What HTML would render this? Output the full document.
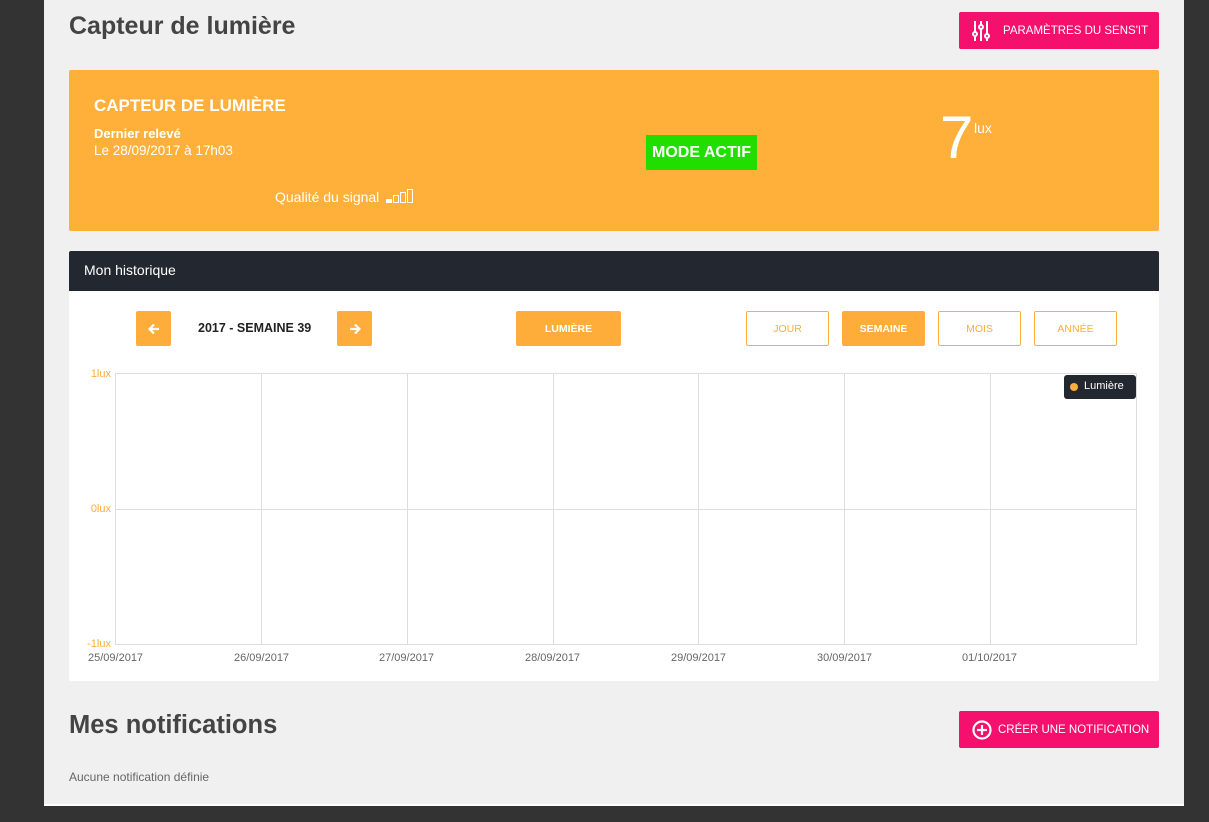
<!DOCTYPE html><html><head><meta charset="utf-8"><style>
*{box-sizing:border-box;margin:0;padding:0}
body{width:1209px;height:822px;background:#333;font-family:"Liberation Sans",sans-serif;position:relative;overflow:hidden}
.panel{position:absolute;left:44px;top:0;width:1140px;height:806px;background:#f0f0f0;border-bottom:2px solid #fff}
.a{position:absolute}
.btn{position:absolute;background:#f5106d;color:#fff;font-size:11.5px;border-radius:2px;display:flex;align-items:center;white-space:nowrap}
.ob{position:absolute;background:#ffad3a;color:#fff;font-size:10.5px;font-weight:bold;display:flex;align-items:center;justify-content:center;border-radius:2px}
.wb{position:absolute;border:1px solid #ffad3a;color:#ffad3a;font-size:10.5px;background:#fff;display:flex;align-items:center;justify-content:center;border-radius:2px}
.gv{position:absolute;top:373px;width:1px;height:271px;background:#ddd}
.gh{position:absolute;left:115px;width:1022px;height:1px;background:#ddd}
.yl{position:absolute;color:#ffad3a;font-size:11px;right:1098px}
.xl{position:absolute;top:652px;font-size:11px;color:#666}
</style></head><body>
<div class="panel"></div>
<div class="a" style="left:69px;top:12px;font-size:25px;font-weight:bold;color:#444">Capteur de lumière</div>
<div class="btn" style="left:959px;top:12px;width:200px;height:37px"><svg style="margin-left:13px" width="18" height="20" viewBox="0 0 18 20" stroke="#fff" stroke-width="2" fill="none"><line x1="3" y1="0" x2="3" y2="20"/><line x1="9" y1="0" x2="9" y2="20"/><line x1="15" y1="0" x2="15" y2="20"/><circle cx="3" cy="13" r="2" fill="#f5106d"/><circle cx="9" cy="6" r="2" fill="#f5106d"/><circle cx="15" cy="15" r="2" fill="#f5106d"/></svg><span style="margin-left:13px">PARAMÈTRES DU SENS'IT</span></div>
<div class="a" style="left:69px;top:70px;width:1090px;height:161px;background:#ffb03b;border-radius:2px"></div>
<div class="a" style="left:94px;top:96px;color:#fff;font-size:17px;font-weight:bold">CAPTEUR DE LUMIÈRE</div>
<div class="a" style="left:94px;top:126px;color:#fff;font-size:13px;font-weight:bold">Dernier relevé</div>
<div class="a" style="left:94px;top:143px;color:#fff;font-size:13.5px">Le 28/09/2017 à 17h03</div>
<div class="a" style="left:275px;top:189px;color:#fff;font-size:14px">Qualité du signal <span style="display:inline-block;width:34px;height:14px;position:relative;vertical-align:-1px"><i style="position:absolute;left:3px;bottom:0;width:6px;height:4px;background:#fff"></i><i style="position:absolute;left:10px;bottom:0;width:6px;height:8px;border:1px solid #fff"></i><i style="position:absolute;left:17px;bottom:0;width:6px;height:11px;border:1px solid #fff"></i><i style="position:absolute;left:24px;bottom:0;width:6px;height:14px;border:1px solid #fff"></i></span></div>
<div class="a" style="left:646px;top:135px;width:111px;height:35px;background:#22dd00;color:#fff;font-weight:bold;font-size:16px;display:flex;align-items:center;justify-content:center">MODE ACTIF</div>
<div class="a" style="left:940px;top:102px;color:#fff;font-size:60px;line-height:72px">7</div>
<div class="a" style="left:974px;top:120px;color:#fff;font-size:14px">lux</div>
<div class="a" style="left:69px;top:251px;width:1090px;height:430px;background:#fff;border-radius:2px"></div>
<div class="a" style="left:69px;top:251px;width:1090px;height:40px;background:#23272f;border-radius:2px 2px 0 0;color:#fff;font-size:14px;padding:11px 15px">Mon historique</div>
<div class="ob" style="left:136px;top:311px;width:35px;height:35px"><svg width="12" height="12" viewBox="0 0 12 12" stroke="#fff" stroke-width="2.2" fill="none"><path d="M11 6H2M6 1.5L1.5 6 6 10.5"/></svg></div>
<div class="a" style="left:198px;top:321px;font-size:12.5px;font-weight:bold;color:#222">2017 - SEMAINE 39</div>
<div class="ob" style="left:337px;top:311px;width:35px;height:35px"><svg width="12" height="12" viewBox="0 0 12 12" stroke="#fff" stroke-width="2.2" fill="none"><path d="M1 6H10M6 1.5L10.5 6 6 10.5"/></svg></div>
<div class="ob" style="left:516px;top:311px;width:105px;height:35px">LUMIÈRE</div>
<div class="wb" style="left:746px;top:311px;width:83px;height:35px">JOUR</div>
<div class="ob" style="left:842px;top:311px;width:83px;height:35px">SEMAINE</div>
<div class="wb" style="left:938px;top:311px;width:83px;height:35px">MOIS</div>
<div class="wb" style="left:1034px;top:311px;width:83px;height:35px">ANNÉE</div>
<div class="gv" style="left:115px"></div><div class="gv" style="left:261px"></div><div class="gv" style="left:407px"></div><div class="gv" style="left:553px"></div><div class="gv" style="left:698px"></div><div class="gv" style="left:844px"></div><div class="gv" style="left:990px"></div><div class="gv" style="left:1136px"></div>
<div class="gh" style="top:373px"></div><div class="gh" style="top:509px"></div><div class="gh" style="top:644px"></div>
<div class="yl" style="top:368px">1lux</div><div class="yl" style="top:503px">0lux</div><div class="yl" style="top:638px">-1lux</div>
<div class="xl" style="left:88px">25/09/2017</div><div class="xl" style="left:234px">26/09/2017</div><div class="xl" style="left:379px">27/09/2017</div><div class="xl" style="left:525px">28/09/2017</div><div class="xl" style="left:671px">29/09/2017</div><div class="xl" style="left:817px">30/09/2017</div><div class="xl" style="left:962px">01/10/2017</div>
<div class="a" style="left:1064px;top:375px;width:72px;height:24px;background:#23272f;border-radius:3px;color:#fff;font-size:11px;padding:5px 0 0 20px"><i style="position:absolute;left:6px;top:8px;width:8px;height:8px;border-radius:50%;background:#ffad3a"></i>Lumière</div>
<div class="a" style="left:69px;top:711px;font-size:25.5px;font-weight:bold;color:#444">Mes notifications</div>
<div class="btn" style="left:959px;top:711px;width:200px;height:37px"><svg style="margin-left:13px" width="20" height="20" viewBox="0 0 20 20" stroke="#fff" stroke-width="2.2" fill="none"><circle cx="10" cy="10" r="8.5"/><line x1="10" y1="5" x2="10" y2="15"/><line x1="5" y1="10" x2="15" y2="10"/></svg><span style="margin-left:6px">CRÉER UNE NOTIFICATION</span></div>
<div class="a" style="left:69px;top:770px;font-size:12px;color:#666">Aucune notification définie</div>
</body></html>
